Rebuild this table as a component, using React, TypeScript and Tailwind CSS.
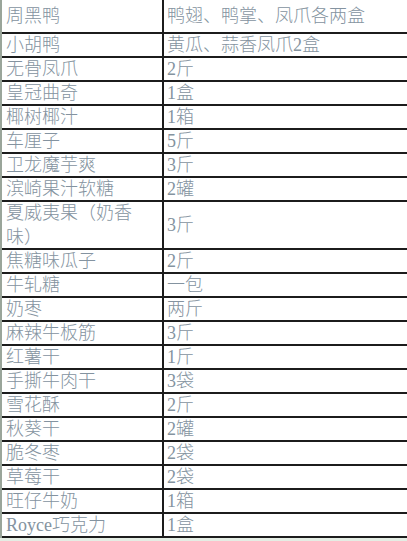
const rows: [string, string][] = [
  ["小胡鸭", "黄瓜、蒜香凤爪2盒"],
  ["无骨凤爪", "2斤"],
  ["皇冠曲奇", "1盒"],
  ["椰树椰汁", "1箱"],
  ["车厘子", "5斤"],
  ["卫龙魔芋爽", "3斤"],
  ["滨崎果汁软糖", "2罐"],
  ["夏威夷果（奶香味）", "3斤"],
  ["焦糖味瓜子", "2斤"],
  ["牛轧糖", "一包"],
  ["奶枣", "两斤"],
  ["麻辣牛板筋", "3斤"],
  ["红薯干", "1斤"],
  ["手撕牛肉干", "3袋"],
  ["雪花酥", "2斤"],
  ["秋葵干", "2罐"],
  ["脆冬枣", "2袋"],
  ["草莓干", "2袋"],
  ["旺仔牛奶", "1箱"],
  ["Royce巧克力", "1盒"],
];

const font = { fontFamily: '"Liberation Serif", "Noto Sans CJK SC", serif' };

export default function App() {
  return (
    <div className="w-[407px] h-[541px] overflow-hidden bg-white" style={font}>
      <div className="grid grid-cols-[162px_1fr] border-l-2 border-[#9aa59a] text-[18px] leading-[20px] font-light text-[#8493a0]">
        {/* Header */}
        <div className="h-[34px] flex items-center pl-[4px] border-b-2 border-r-2 border-[#1c1c1c]">周黑鸭</div>
        <div className="h-[34px] flex items-center pl-[3px] border-b-2 border-[#1c1c1c]">鸭翅、鸭掌、凤爪各两盒</div>

        {rows.map(([name, qty]) => {
          const tall = name.length > 8;
          return (
            <div key={name} className="contents">
              <div
                className={`${tall ? "h-[48px]" : "h-[24px]"} flex items-center pl-[4px] border-b-2 border-r-2 border-[#1c1c1c] whitespace-nowrap`}
              >
                {tall ? (
                  <span className="leading-[24px]">
                    夏威夷果（奶香
                    <br />
                    味）
                  </span>
                ) : (
                  name
                )}
              </div>
              <div
                className={`${tall ? "h-[48px]" : "h-[24px]"} flex items-center pl-[3px] border-b-2 border-[#1c1c1c] whitespace-nowrap`}
              >
                {qty}
              </div>
            </div>
          );
        })}
      </div>
      <div className="h-[4px] bg-[#e4ede4]" />
    </div>
  );
}
